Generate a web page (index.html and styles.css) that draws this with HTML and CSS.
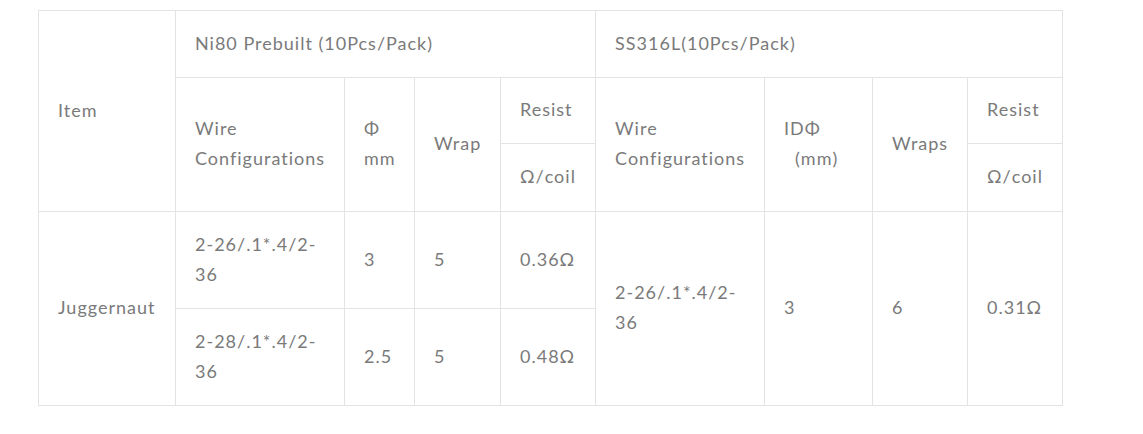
FILE: index.html
```html
<!DOCTYPE html>
<html>
<head>
<meta charset="utf-8">
<link rel="stylesheet" href="styles.css">
</head>
<body>
<div class="wrap">
<table class="spec">
<colgroup>
<col class="c1"><col class="c2"><col class="c3"><col class="c4"><col class="c5"><col class="c6"><col class="c7"><col class="c8"><col class="c9">
</colgroup>
<tr class="r1">
<td rowspan="3">Item</td>
<td colspan="4">Ni80 Prebuilt (10Pcs/Pack)</td>
<td colspan="4">SS316L(10Pcs/Pack)</td>
</tr>
<tr class="r2">
<td rowspan="2">Wire<br>Configurations</td>
<td rowspan="2">Φ<br>mm</td>
<td rowspan="2">Wrap</td>
<td>Resist</td>
<td rowspan="2">Wire<br>Configurations</td>
<td rowspan="2">IDΦ<br><span class="indent">(mm)</span></td>
<td rowspan="2">Wraps</td>
<td>Resist</td>
</tr>
<tr class="r3">
<td>Ω/coil</td>
<td>Ω/coil</td>
</tr>
<tr class="b1">
<td rowspan="2">Juggernaut</td>
<td>2-26/.1*.4/2-<br>36</td>
<td>3</td>
<td>5</td>
<td>0.36Ω</td>
<td rowspan="2">2-26/.1*.4/2-<br>36</td>
<td rowspan="2">3</td>
<td rowspan="2">6</td>
<td rowspan="2">0.31Ω</td>
</tr>
<tr class="b2">
<td>2-28/.1*.4/2-<br>36</td>
<td>2.5</td>
<td>5</td>
<td>0.48Ω</td>
</tr>
</table>
</div>
</body>
</html>
```
FILE: styles.css
```css
html, body {
  margin: 0;
  padding: 0;
  background: #fff;
}
.wrap {
  padding: 10px 0 0 38px;
}
.spec {
  border-collapse: collapse;
  table-layout: fixed;
  width: 1025px;
  font-family: Lato, "Liberation Sans", sans-serif;
  font-size: 18px;
  line-height: 30px;
  color: #7a7a7a;
  letter-spacing: 1px;
}
.spec td {
  border: 1px solid #e3e3e3;
  padding: 0 0 3px 19px;
  vertical-align: middle;
  text-align: left;
}
.c1 { width: 137px; }
.c2 { width: 169px; }
.c3 { width: 70px; }
.c4 { width: 86px; }
.c5 { width: 95px; }
.c6 { width: 169px; }
.c7 { width: 108px; }
.c8 { width: 95px; }
.c9 { width: 95px; }
.r1 { height: 67px; }
.r2 { height: 66px; }
.r3 { height: 68px; }
.b1 { height: 97px; }
.b2 { height: 97px; }
.indent {
  padding-left: 11px;
}
```
